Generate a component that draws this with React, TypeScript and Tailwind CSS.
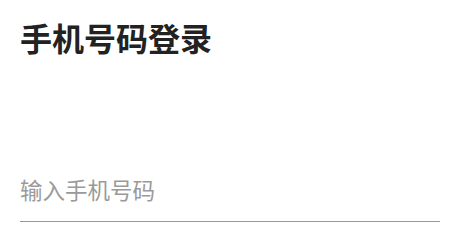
export default function App() {
  return (
    <div
      className="min-h-screen bg-white pl-5"
      style={{ fontFamily: '"Noto Sans CJK SC", "Noto Sans", sans-serif' }}
    >
      <h1 className="pt-[13px] text-[32px] font-bold leading-[48px] text-[#222222]">
        手机号码登录
      </h1>
      <div className="mt-[96px] w-[420px] border-b border-[#999999]">
        <input
          type="tel"
          placeholder="输入手机号码"
          className="h-[64px] w-full bg-transparent text-[22.5px] text-[#333333] outline-none placeholder:text-[#9a9a9a]"
        />
      </div>
    </div>
  );
}
